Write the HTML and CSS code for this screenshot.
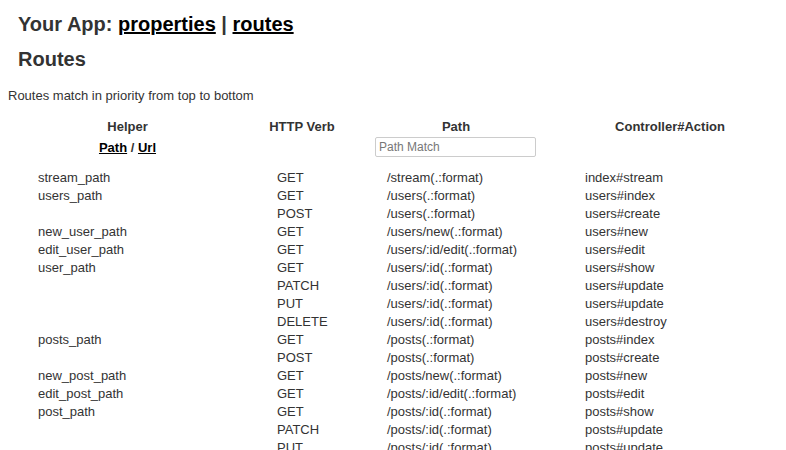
FILE: index.html
```html
<!DOCTYPE html>
<html>
<head>
<meta charset="utf-8">
<title>Routes</title>
<link rel="stylesheet" href="styles.css">
</head>
<body>
<h1 class="title">Your App: <a href="#">properties</a> | <a href="#">routes</a></h1>
<h2 class="subtitle">Routes</h2>
<p class="note">Routes match in priority from top to bottom</p>
<table class="routes">
  <colgroup>
    <col class="c-helper"><col class="c-verb"><col class="c-path"><col class="c-action">
  </colgroup>
  <thead>
    <tr class="head">
      <th>Helper</th><th>HTTP Verb</th><th>Path</th><th>Controller#Action</th>
    </tr>
    <tr class="head bottom">
      <th class="links"><a href="#">Path</a> / <a href="#">Url</a></th>
      <th></th>
      <th><input class="search" type="search" placeholder="Path Match"></th>
      <th></th>
    </tr>
  </thead>
  <tbody>
    <tr><td>stream_path</td><td>GET</td><td>/stream(.:format)</td><td>index#stream</td></tr>
    <tr><td>users_path</td><td>GET</td><td>/users(.:format)</td><td>users#index</td></tr>
    <tr><td></td><td>POST</td><td>/users(.:format)</td><td>users#create</td></tr>
    <tr><td>new_user_path</td><td>GET</td><td>/users/new(.:format)</td><td>users#new</td></tr>
    <tr><td>edit_user_path</td><td>GET</td><td>/users/:id/edit(.:format)</td><td>users#edit</td></tr>
    <tr><td>user_path</td><td>GET</td><td>/users/:id(.:format)</td><td>users#show</td></tr>
    <tr><td></td><td>PATCH</td><td>/users/:id(.:format)</td><td>users#update</td></tr>
    <tr><td></td><td>PUT</td><td>/users/:id(.:format)</td><td>users#update</td></tr>
    <tr><td></td><td>DELETE</td><td>/users/:id(.:format)</td><td>users#destroy</td></tr>
    <tr><td>posts_path</td><td>GET</td><td>/posts(.:format)</td><td>posts#index</td></tr>
    <tr><td></td><td>POST</td><td>/posts(.:format)</td><td>posts#create</td></tr>
    <tr><td>new_post_path</td><td>GET</td><td>/posts/new(.:format)</td><td>posts#new</td></tr>
    <tr><td>edit_post_path</td><td>GET</td><td>/posts/:id/edit(.:format)</td><td>posts#edit</td></tr>
    <tr><td>post_path</td><td>GET</td><td>/posts/:id(.:format)</td><td>posts#show</td></tr>
    <tr><td></td><td>PATCH</td><td>/posts/:id(.:format)</td><td>posts#update</td></tr>
    <tr><td></td><td>PUT</td><td>/posts/:id(.:format)</td><td>posts#update</td></tr>
    <tr><td></td><td>DELETE</td><td>/posts/:id(.:format)</td><td>posts#destroy</td></tr>
  </tbody>
</table>
</body>
</html>
```
FILE: styles.css
```css
body {
  margin: 8px;
  background: #fff;
  color: #333;
  font-family: "Liberation Sans", Arial, Helvetica, sans-serif;
  font-size: 13px;
  line-height: 18px;
}
a { color: #000; }
.title {
  font-size: 20px;
  line-height: 24px;
  margin: 4px 0 0;
  padding-left: 10px;
}
.subtitle {
  font-size: 20px;
  line-height: 24px;
  margin: 11px 0 0;
  padding-left: 10px;
}
.note {
  margin: 16px 0 13px;
}
.routes {
  border-collapse: collapse;
  table-layout: fixed;
  width: 777px;
}
.c-helper { width: 239px; }
.c-verb { width: 110px; }
.c-path { width: 198px; }
.c-action { width: 230px; }
.routes th {
  font-weight: bold;
  text-align: center;
  padding: 0;
  line-height: 18px;
}
.routes .bottom th {
  padding: 1px 0 12px;
  vertical-align: top;
}
.routes .bottom th.links {
  padding-top: 3px;
}
.routes td {
  padding: 0 30px;
  white-space: nowrap;
}
.search {
  box-sizing: border-box;
  width: 161px;
  height: 20px;
  margin: 0 0 0 18px;
  padding: 0 3px;
  border: 1px solid #ccc;
  border-radius: 2px;
  font-family: "Liberation Sans", Arial, sans-serif;
  font-size: 12px;
  color: #333;
  display: block;
}
.search::placeholder { color: #777; }
```
